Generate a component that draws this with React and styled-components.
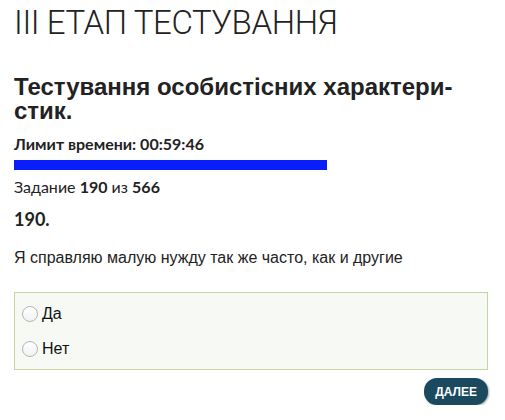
import React, { useState } from 'react';
import styled, { createGlobalStyle } from 'styled-components';

const GlobalStyle = createGlobalStyle`
  html, body {
    margin: 0;
    padding: 0;
    background: #ffffff;
  }
  body {
    font-family: 'Liberation Sans', Arial, sans-serif;
    color: #222222;
  }
`;

const answers = ['Да', 'Нет'];

const App = () => {
  const [choice, setChoice] = useState(null);
  const progress = (46 + 59 * 60) / 3600;

  return (
    <>
      <GlobalStyle />
      <Page>
        <StageTitle>III ЕТАП ТЕСТУВАННЯ</StageTitle>
        <TestTitle>
          Тестування особистісних характери-
          <br />
          стик.
        </TestTitle>
        <TimeLimit>Лимит времени: 00:59:46</TimeLimit>
        <BarTrack>
          <BarFill style={{ width: `${progress * 100}%` }} />
        </BarTrack>
        <Counter>
          Задание <b>190</b> из <b>566</b>
        </Counter>
        <QuestionNumber>190.</QuestionNumber>
        <QuestionText>Я справляю малую нужду так же часто, как и другие</QuestionText>
        <AnswerBox>
          {answers.map((a) => (
            <AnswerRow key={a}>
              <Radio
                type="radio"
                name="answer"
                checked={choice === a}
                onChange={() => setChoice(a)}
              />
              <AnswerLabel>{a}</AnswerLabel>
            </AnswerRow>
          ))}
        </AnswerBox>
        <Footer>
          <NextBtn>ДАЛЕЕ</NextBtn>
        </Footer>
      </Page>
    </>
  );
};

export default App;

const Page = styled.div`
  padding: 5px 17px 0 14px;
  display: flex;
  flex-direction: column;
`;

const StageTitle = styled.h1`
  margin: 0;
  font-family: Roboto, 'Liberation Sans', sans-serif;
  font-weight: 300;
  font-size: 33px;
  line-height: 36px;
  color: #222;
  letter-spacing: -0.4px;
`;

const TestTitle = styled.h2`
  margin: 34px 0 0;
  font-family: 'Liberation Sans', Arial, sans-serif;
  font-weight: 700;
  font-size: 24px;
  line-height: 24px;
  color: #222;
`;

const TimeLimit = styled.div`
  margin-top: 12px;
  font-family: Lato, 'Liberation Sans', sans-serif;
  font-weight: 700;
  font-size: 16px;
  line-height: 18px;
`;

const BarTrack = styled.div`
  margin-top: 7px;
  width: 314px;
  height: 10px;
`;

const BarFill = styled.div`
  height: 100%;
  background: #0a1efc;
`;

const Counter = styled.div`
  margin-top: 7px;
  font-family: Lato, 'Liberation Sans', sans-serif;
  font-size: 16px;
  line-height: 20px;
  b {
    font-weight: 700;
  }
`;

const QuestionNumber = styled.div`
  margin-top: 11px;
  font-family: Lato, 'Liberation Sans', sans-serif;
  font-weight: 700;
  font-size: 18px;
  line-height: 22px;
`;

const QuestionText = styled.p`
  margin: 19px 0 0;
  font-family: 'Liberation Sans', Arial, sans-serif;
  font-size: 16px;
  line-height: 18px;
`;

const AnswerBox = styled.div`
  margin-top: 25px;
  border: 1px solid #c4d5a3;
  background: #f7f9f4;
  padding: 7px 7px 6px;
  display: flex;
  flex-direction: column;
  gap: 7px;
`;

const AnswerRow = styled.label`
  display: flex;
  align-items: center;
  height: 28px;
  cursor: pointer;
`;

const Radio = styled.input`
  appearance: none;
  width: 16px;
  height: 16px;
  margin: 0 4px 0 0;
  border: 1px solid #b5b5b5;
  border-radius: 50%;
  background: linear-gradient(#ffffff, #f2f2f2);
  &:checked {
    background: radial-gradient(#333 0 3px, #fff 4px);
  }
`;

const AnswerLabel = styled.span`
  font-size: 16px;
  color: #111;
`;

const Footer = styled.div`
  display: flex;
  justify-content: flex-end;
  margin-top: 8px;
`;

const NextBtn = styled.button`
  border: none;
  background: #1b4a5e;
  color: #fff;
  font-family: 'Liberation Sans', Arial, sans-serif;
  font-weight: 700;
  font-size: 12px;
  height: 27px;
  padding: 0 11px;
  border-radius: 13px;
  box-shadow: 1px 1px 2px rgba(0, 0, 0, 0.35);
  cursor: pointer;
`;
